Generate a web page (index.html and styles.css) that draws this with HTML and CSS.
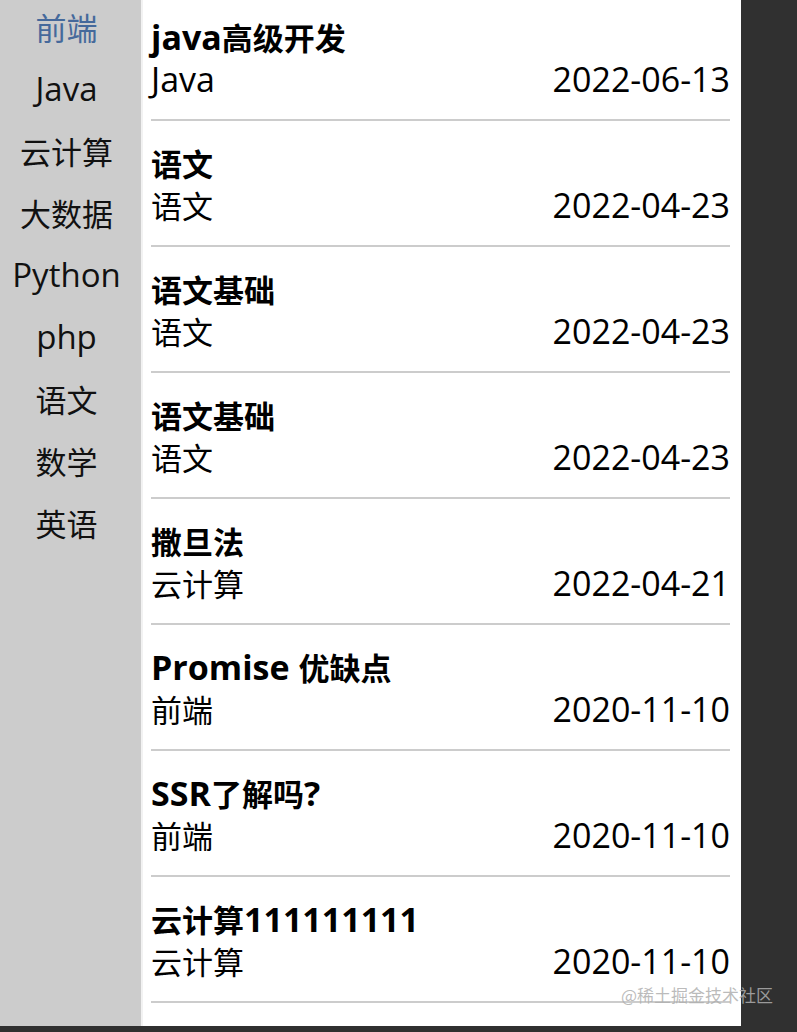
FILE: index.html
```html
<!DOCTYPE html>
<html>
<head>
<meta charset="utf-8"/>
<title>文章列表</title>
<link rel="stylesheet" href="styles.css">
</head>
<body>
<div class="app">
  <ul class="nav">
    <li class="active"><span class="zh">前端</span></li>
    <li>Java</li>
    <li><span class="zh">云计算</span></li>
    <li><span class="zh">大数据</span></li>
    <li>Python</li>
    <li>php</li>
    <li><span class="zh">语文</span></li>
    <li><span class="zh">数学</span></li>
    <li><span class="zh">英语</span></li>
  </ul>

  <div class="main">
    <ul class="list">
      <li class="item">
        <div class="title">java<span class="zh">高级开发</span></div>
        <div class="meta"><span>Java</span><span>2022-06-13</span></div>
      </li>
      <li class="item">
        <div class="title"><span class="zh">语文</span></div>
        <div class="meta"><span class="zh">语文</span><span>2022-04-23</span></div>
      </li>
      <li class="item">
        <div class="title"><span class="zh">语文基础</span></div>
        <div class="meta"><span class="zh">语文</span><span>2022-04-23</span></div>
      </li>
      <li class="item">
        <div class="title"><span class="zh">语文基础</span></div>
        <div class="meta"><span class="zh">语文</span><span>2022-04-23</span></div>
      </li>
      <li class="item">
        <div class="title"><span class="zh">撒旦法</span></div>
        <div class="meta"><span class="zh">云计算</span><span>2022-04-21</span></div>
      </li>
      <li class="item">
        <div class="title">Promise <span class="zh">优缺点</span></div>
        <div class="meta"><span class="zh">前端</span><span>2020-11-10</span></div>
      </li>
      <li class="item">
        <div class="title">SSR<span class="zh">了解吗</span>?</div>
        <div class="meta"><span class="zh">前端</span><span>2020-11-10</span></div>
      </li>
      <li class="item">
        <div class="title"><span class="zh">云计算</span>111111111</div>
        <div class="meta"><span class="zh">云计算</span><span>2020-11-10</span></div>
      </li>
    </ul>
  </div>
</div>

<div class="watermark">@稀土掘金技术社区</div>
</body>
</html>
```

FILE: styles.css
```css
html, body {
  margin: 0;
  padding: 0;
}

body {
  background-color: #303030;
  font-family: "Open Sans", "Noto Sans CJK SC", sans-serif;
  color: #000;
  width: 797px;
  height: 1032px;
  overflow: hidden;
  position: relative;
}

ul {
  list-style: none;
  margin: 0;
  padding: 0;
}

/* chinese runs are set a little smaller than the latin ones */
.zh {
  font-family: "Noto Sans CJK SC", sans-serif;
  font-size: 31px;
}

/* page is scrolled down a few px */
.app {
  display: flex;
  width: 741px;
  height: 1030px;
  margin-top: -4px;
  overflow: hidden;
  background-color: #fff;
}

/* left category menu */
.nav {
  width: 141px;
  flex-shrink: 0;
  background-color: #cccccc;
  border-right: 2px solid #f2f2f2;
}

.nav li {
  height: 62px;
  line-height: 62px;
  padding-right: 8px;
  text-align: center;
  font-size: 33px;
  color: #111;
}

.nav li.active {
  color: #45699b;
}

/* article list */
.main {
  flex: 1;
  padding: 0 11px 0 8px;
}

.list {
  margin-top: -1px;
}

.item {
  height: 126px;
  padding-top: 22px;
  box-sizing: border-box;
  border-bottom: 2px solid #cccccc;
}

.title {
  font-size: 34px;
  font-weight: bold;
  line-height: 40px;
  white-space: nowrap;
}

.meta {
  display: flex;
  justify-content: space-between;
  font-size: 34px;
  line-height: 44px;
}

.watermark {
  position: absolute;
  left: 621px;
  top: 983px;
  font-size: 17px;
  line-height: 24px;
  color: rgba(175, 175, 175, 0.85);
  font-family: "Noto Sans CJK SC", sans-serif;
}
```
